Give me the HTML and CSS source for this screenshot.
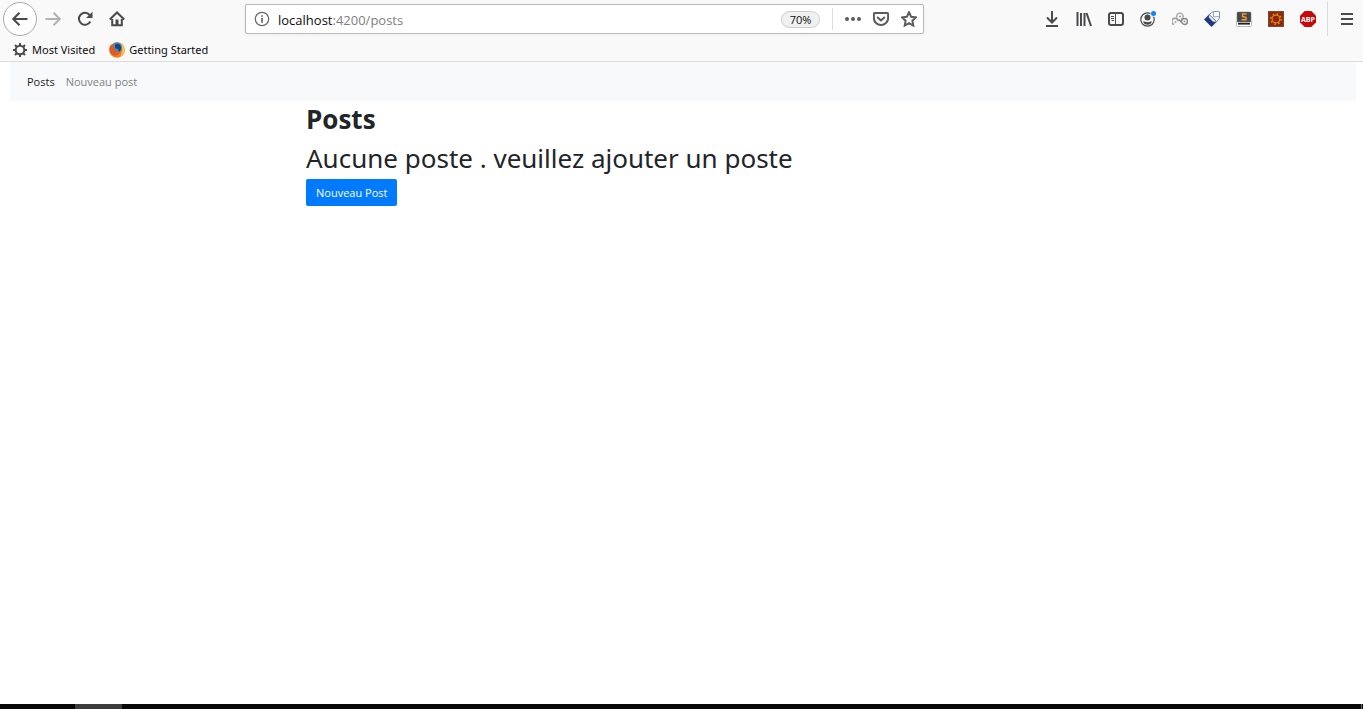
FILE: index.html
```html
<!DOCTYPE html>
<html lang="fr">
<head>
<meta charset="utf-8">
<title>Posts</title>
<link rel="stylesheet" href="styles.css">
</head>
<body>
<header class="chrome">
  <div class="toolbar">
    <button class="tool back" aria-label="Back"><svg viewBox="0 0 16 16"><path d="M15.500 8H2M7.500 1.700 1.200 8l6.300 6.300" class="line"/></svg></button>
    <button class="tool forward" aria-label="Forward"><svg viewBox="0 0 16 16"><path d="M.5 8H14M8.500 1.700 14.800 8l-6.300 6.300" class="line"/></svg></button>
    <button class="tool" aria-label="Reload"><svg viewBox="0 0 16 16"><path d="M13.300 10.500A6 6 0 1 1 12.600 4" class="line"/><path d="M15.500.8v6.200H9z" class="solid"/></svg></button>
    <button class="tool" aria-label="Home"><svg viewBox="0 0 16 16"><path d="M.8 8.500 8 1.500l7.200 7M3.200 8v6.200h9.600V8" class="line"/><path d="M6.500 8.500h3V14h-3z" class="solid"/></svg></button>
    <div class="spacer"></div>
    <div class="urlbar">
      <svg class="info" viewBox="0 0 16 16"><circle cx="8" cy="8" r="6.700" fill="none" stroke="#666" stroke-width="1.200"/><path d="M7.200 7h1.700v4.800H7.200zM7.200 4.200h1.700v1.600H7.200z" fill="#666"/></svg>
      <div class="address" role="textbox" aria-label="Address" contenteditable="true" spellcheck="false">localhost<span class="path">:4200/posts</span></div>
      <button class="zoom">70%</button>
      <div class="url-rule"></div>
      <button class="url-action" aria-label="Page actions"><svg viewBox="0 0 16 16"><g fill="#5c5c5e"><circle cx="2" cy="8" r="2"/><circle cx="8" cy="8" r="2"/><circle cx="14" cy="8" r="2"/></g></svg></button>
      <button class="url-action" aria-label="Save to Pocket"><svg viewBox="0 0 16 16"><path d="M1.900 2h12.200c.6 0 1 .4 1 1v4.200a7.100 6.800 0 0 1-14.200 0V3c0-.6.400-1 1-1z" class="line"/><path d="m4.700 6.500 3.300 3 3.300-3" class="line round"/></svg></button>
      <button class="url-action" aria-label="Bookmark this page"><svg viewBox="0 0 16 16"><path d="m8 1.200 2.100 4.500 4.900.6-3.600 3.400.9 4.900L8 12.200l-4.300 2.400.9-4.900L1 6.300l4.900-.6z" class="line"/></svg></button>
    </div>
    <div class="spacer"></div>
    <button class="tool" aria-label="Downloads"><svg viewBox="0 0 16 16"><path d="M8 0v11M3 6.500l5 5 5-5M2 15h12" class="line"/></svg></button>
    <button class="tool" aria-label="Library"><svg viewBox="0 0 16 16"><path d="M1.500 1v14M5 2v13M8.500 2v13M10.500 2l4.500 13" class="line"/></svg></button>
    <button class="tool" aria-label="Sidebars"><svg viewBox="0 0 16 16"><rect x="1" y="2" width="14" height="12" rx="2" class="line"/><path d="M7.500 2v12M3 5.500h3M3 7.500h3M3.500 9.500H6" fill="none" stroke="#4a4a4c"/></svg></button>
    <button class="tool" aria-label="Account"><svg viewBox="0 0 16 16"><circle cx="7.500" cy="8.500" r="6.700" fill="none" stroke="#4a4a4c" stroke-width="1.200"/><circle cx="7.500" cy="6.500" r="3" class="solid"/><path d="M3 10.500c2 0 2.500.7 4.500.7s2.500-.7 4.500-.7c-.5 2-2.500 3.300-4.500 3.300S3.500 12.500 3 10.500z" class="solid"/><circle cx="13.500" cy="2.600" r="3.200" fill="#f9f9fa"/><circle cx="13.500" cy="2.600" r="2.500" fill="#0a84ff"/></svg></button>
    <button class="tool" aria-label="Rings extension"><svg viewBox="0 0 16 16" fill="none" stroke-width="1.500"><path d="M4.900 6.800A3.300 3.300 0 1 1 9 8.500" stroke="#aaa"/><path d="M2 13.500a3.200 3.200 0 1 1 4.200-3.200" stroke="#999"/><path d="M9.500 10.500a3 3 0 1 1 3 3c-2.500 0-3-3.500-6-5" stroke="#888"/><path d="M7.200 5.500h1.600M2.700 11h1.600M11.700 10.500h1.600" stroke="#888"/></svg></button>
    <button class="tool" aria-label="Tag extension"><svg viewBox="0 0 16 16"><path d="M0 8.500 5 3.500l7.700 7.300L7.500 16z" fill="#21387f"/><path d="m5 3.500 4.500-3H15a.5.500 0 0 1 .5.500v6l-2.800 3.800z" fill="#fff" stroke="#7e95c9"/><path d="M5 3.500v3l4.200 4.300h3.500z" fill="#fff" stroke="#6e83b5" stroke-width=".6"/><path d="m5 3.500 7.700 7.300M9.500.5v5.200h6" stroke="#6e83b5" stroke-width=".7" fill="none"/></svg></button>
    <button class="tool" aria-label="Editor extension"><svg viewBox="0 0 16 16"><path d="M.5 10v4.500a1 1 0 0 0 1 1h13a1 1 0 0 0 1-1V10" fill="#fff" stroke="#bbb"/><rect x="1" y="1" width="14" height="10" rx="1" fill="#484848" stroke="#777" stroke-width=".5"/><path d="M10.500 3H6.500v2.500l3.500 1v2.300H5.500" fill="none" stroke="#f49b3c" stroke-width="1.400"/><path d="M2 12.700h12" stroke="#222" stroke-width="1.800"/></svg></button>
    <button class="tool" aria-label="Gear extension"><svg viewBox="0 0 16 16"><rect x=".5" y=".5" width="15" height="15" fill="#912704" stroke="#784c35"/><circle cx="8" cy="8" r="3.900" fill="none" stroke="#d98b20" stroke-width="1.200"/><circle cx="8" cy="8" r="5.200" fill="none" stroke="#d98b20" stroke-width="1.600" stroke-dasharray="1.500 2.584"/></svg></button>
    <button class="tool" aria-label="Adblock Plus"><svg viewBox="0 0 16 16"><path d="M4.700 0h6.600L16 4.700v6.600L11.300 16H4.700L0 11.300V4.700z" fill="#c80808"/><text x="8" y="11" class="abp">ABP</text></svg></button>
    <div class="menu-box"><button class="menu" aria-label="Menu"><svg viewBox="0 0 16 16"><path d="M2 3h12M2 8h12M2 13h12" class="line"/></svg></button></div>
  </div>
  <nav class="bookmarks" aria-label="Bookmarks">
    <a href="#"><svg viewBox="0 0 16 16"><circle cx="8" cy="8" r="4.300" class="line"/><path d="M8 1v3M8 12v3M1 8h3M12 8h3M3 3l2.200 2.200M10.800 10.800 13 13M3 13l2.200-2.200M10.800 5.200 13 3" class="line"/></svg>Most Visited</a>
    <a href="#"><svg viewBox="0 0 16 16"><circle cx="8" cy="8" r="7.800" fill="#ef7d22"/><path d="M12 1.500c4.500 3 5 10-1 13.700C13 12 14 7 12 1.500z" fill="#fdc43f"/><circle cx="8" cy="5.500" r="5" fill="#3b8bc9"/><path d="M6 3c2-2 5-1.500 6 2 .6 2-.5 4-2 5l-1-3-3-1z" fill="#17457f"/><path d="M.5 5.500 2 2.500l1.500 2 3 .2-1 2 2 1.300-1.500 1.500c1.500 1.500 4 1 5.500-.5-.5 4-5.500 5.500-8.500 3.500C1 11 .2 8 .5 5.500z" fill="#e35a20"/></svg>Getting Started</a>
  </nav>
</header>
<nav class="navbar">
  <a class="active" href="#">Posts</a>
  <a href="#">Nouveau post</a>
</nav>
<main class="container">
  <h1>Posts</h1>
  <h2>Aucune poste . veuillez ajouter un poste</h2>
  <button class="primary">Nouveau Post</button>
</main>
<footer class="taskbar"><div class="task"></div><div class="peek"></div></footer>
</body>
</html>
```
FILE: styles.css
```css
* { box-sizing: border-box; }

body {
  margin: 0;
  min-height: 100vh;
  display: flex;
  flex-direction: column;
  background: #fff;
  color: #212529;
  font-family: "Open Sans", "Noto Sans", sans-serif;
}

button {
  margin: 0;
  padding: 0;
  border: 0;
  background: none;
  font-family: inherit;
}

a { text-decoration: none; }

svg { display: block; width: 16px; height: 16px; flex: none; }
.line { fill: none; stroke: #4a4a4c; stroke-width: 2; }
.round { stroke-linecap: round; stroke-linejoin: round; }
.solid { fill: #4a4a4c; }

.chrome { background: #f9f9fa; border-bottom: 1px solid #dcdcdc; }

.toolbar { display: flex; align-items: center; height: 38px; padding-left: 3px; }
.tool { display: flex; align-items: center; justify-content: center; width: 32px; height: 32px; flex: none; }
.back { width: 34px; height: 34px; border: 1px solid #aaa; border-radius: 50%; background: #fff; }
.forward { opacity: 0.4; }
.spacer { flex: 1 1 112px; }

.urlbar {
  display: flex;
  align-items: center;
  flex: 6 1 679px;
  height: 30px;
  padding-left: 8px;
  border: 1px solid #b8b8b8;
  border-radius: 2px;
  background: #fff;
  box-shadow: 0 1px 4px #0000000d;
}
.address { flex: 1; padding: 1px 0 0 8px; font-size: 13px; color: #0c0c0d; outline: none; white-space: nowrap; }
.path { color: #808080; }
.zoom { width: 39px; height: 17px; border: 1px solid #ccc; border-radius: 9px; background: #f0f0f0; color: #0c0c0d; font-size: 11px; line-height: 15px; }
.url-rule { width: 1px; height: 22px; margin: 0 6px 0 12px; background: #dcdcdc; }
.url-action { display: flex; align-items: center; justify-content: center; width: 28px; height: 28px; }
.url-action .line { stroke: #5c5c5e; }

.abp { fill: #fff; font: bold 7px "Open Sans", sans-serif; text-anchor: middle; }
.menu-box { display: flex; align-items: center; width: 36px; height: 34px; margin-left: 3px; padding-left: 11px; border-left: 1px solid #dcdcdc; }

.bookmarks { display: flex; gap: 14px; height: 23px; padding: 0 12px; }
.bookmarks a { display: flex; align-items: center; gap: 4px; color: #0c0c0d; font-family: "Noto Sans", sans-serif; font-size: 11px; }

.navbar { display: flex; align-items: center; gap: 11px; height: 39px; margin: 0 7px 0 10px; padding: 0 17px; background: #f8f9fa; font-size: 11px; }
.navbar a { color: #808182; }
.navbar .active { color: #1a1b1c; }

.container { flex: 1; width: 100%; max-width: 751px; margin: 0 auto; }
h1, h2 { margin: 0 0 4px; font-size: 26px; line-height: 34px; }
h1 { padding: 1px 0; }
h2 { font-family: "Noto Sans", sans-serif; font-weight: 400; }
.primary { height: 27px; padding: 0 10px; border-radius: 2px; background: #007bff; color: #fff; font-size: 11px; }

.taskbar { display: flex; height: 5px; padding-left: 75px; background: #080808; }
.task { width: 47px; background: #3c3c3c; }
.peek { width: 1px; margin: 0 1px 0 auto; background: #666; }
```
